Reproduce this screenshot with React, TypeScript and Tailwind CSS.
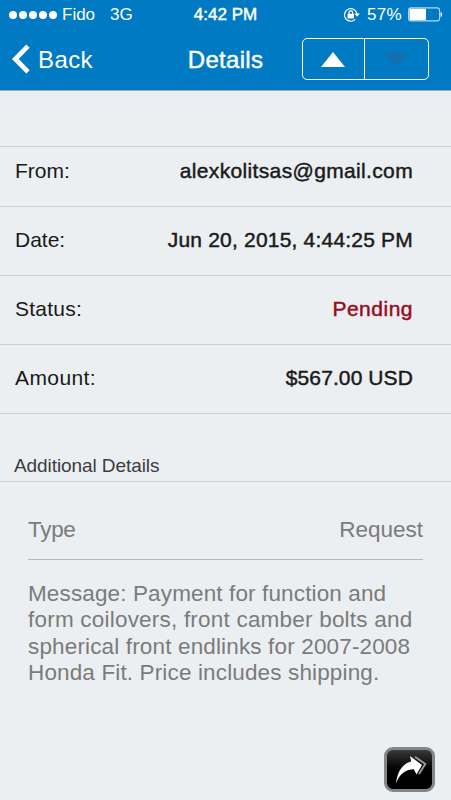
import React from "react";

const medium = "[-webkit-text-stroke:0.45px_currentColor]";

interface RowProps {
  label: string;
  value: string;
  labelClass?: string;
  valueClass?: string;
  rowClass?: string;
}

function Row({ label, value, labelClass = "", valueClass = "", rowClass = "h-[69px] leading-[65px]" }: RowProps) {
  return (
    <div className={`flex justify-between border-b border-[#cbcdcf] pl-[15px] pr-[38px] text-[21px] text-[#1a1a1a] whitespace-nowrap ${rowClass}`}>
      <span className={labelClass}>{label}</span>
      <span className={`${medium} ${valueClass}`}>{value}</span>
    </div>
  );
}

function StatusBar() {
  return (
    <div className="grid h-[30px] grid-cols-3 items-center whitespace-nowrap pb-px text-[17px] leading-[29px]">
      <div className="flex items-center pl-[9px]">
        <div className="flex gap-[2px]">
          {[0, 1, 2, 3, 4].map((i) => (
            <span key={i} className="h-2 w-2 rounded-full bg-white" />
          ))}
        </div>
        <span className="ml-[5px]">Fido</span>
        <span className="ml-[15px]">3G</span>
      </div>
      <div className={`text-center ${medium}`}>4:42 PM</div>
      <div className="flex items-center justify-end pr-[8px]">
        <svg className="h-4 w-[17px]" viewBox="0 0 17 16" fill="none">
          <path d="M14 7A6.300 6.300 0 1 0 12.300 12.300" stroke="white" strokeWidth="1.200" />
          <path d="M11.400 6.600h5.400l-2.700 3.200z" fill="white" />
          <rect x="4.600" y="6.800" width="6.400" height="4.600" rx=".5" fill="white" />
          <path d="M6 7.200V5.600a1.800 1.800 0 0 1 3.600 0V7.200" stroke="white" strokeWidth="1.200" />
        </svg>
        <span className="ml-[7px] tracking-[0.3px]">57%</span>
        <svg className="ml-[6px] h-[15px] w-[35px]" viewBox="0 0 35 15" fill="none">
          <rect x="0.600" y="0.900" width="31" height="13" rx="2.500" stroke="#b5d8ee" strokeWidth="1.100" />
          <rect x="1.500" y="1.800" width="16.500" height="11.400" rx="1" fill="white" />
          <path d="M32.600 5c2 .6 2 4.400 0 5z" fill="white" />
        </svg>
      </div>
    </div>
  );
}

function NavBar() {
  return (
    <div className="grid h-[60px] grid-cols-3 whitespace-nowrap text-[24px] leading-[59px]">
      <div className="flex pl-[12px]">
        <svg className="mt-[14px] h-[30px] w-[18px]" viewBox="0 0 18 30">
          <path d="M14.300 0.500L17.600 3.800L6.700 15L17.600 26.200L14.300 29.500L0 15z" fill="white" />
        </svg>
        <span className="ml-[8px] tracking-[0.4px]">Back</span>
      </div>
      <div className={`text-center tracking-[0.3px] ${medium}`}>Details</div>
      <div className="flex justify-end pr-[22px]">
        <div className="mt-[8px] flex h-[42px] w-[127px] rounded-[5px] border border-white">
          <div className="flex w-[62px] items-center justify-center border-r border-white">
            <svg className="h-[15px] w-6" viewBox="0 0 24 15"><path d="M12 0L24 15H0z" fill="white" /></svg>
          </div>
          <div className="flex flex-1 items-center justify-center">
            <svg className="h-[15px] w-6" viewBox="0 0 24 15"><path d="M0 0H24L12 15z" fill="#146faf" /></svg>
          </div>
        </div>
      </div>
    </div>
  );
}

export default function App() {
  return (
    <div className="flex h-[800px] w-[451px] flex-col overflow-hidden bg-[#ebeff1] font-['Liberation_Sans',Arial,sans-serif]">
      <header className="h-[91px] shrink-0 border-b border-[#9ba7b2] bg-[#007ac2] text-white">
        <StatusBar />
        <NavBar />
      </header>
      <main className="flex flex-1 flex-col">
        <div className="h-14 border-b border-[#cbcdcf]" />
        <Row label="From:" value="alexkolitsas@gmail.com" valueClass="tracking-[0.35px]" rowClass="h-[60px] leading-[47px]" />
        <Row label="Date:" value="Jun 20, 2015, 4:44:25 PM" valueClass="tracking-[0.2px]" />
        <Row label="Status:" value="Pending" labelClass="tracking-[0.25px]" valueClass="tracking-[0.5px] text-[#980b1d]" />
        <Row label="Amount:" value="$567.00 USD" labelClass="tracking-[0.4px]" valueClass="tracking-[0.1px]" />
        <h2 className="h-[68px] border-b border-[#cbcdcf] pl-[14px] pt-[37px] text-[19px] leading-[30px] tracking-[-0.08px] text-[#3c3c3c]">Additional Details</h2>
        <section className="px-7 text-[22.500px] text-[#7b7b7b]">
          <div className="flex h-[78px] justify-between border-b border-[#b5b8ba] leading-[95px]">
            <span className="tracking-[-0.3px]">Type</span>
            <span>Request</span>
          </div>
          <p className="whitespace-nowrap pt-[21px] leading-[26.400px]">
            <span className="block tracking-[0.13px]">Message: Payment for function and</span>
            <span className="block tracking-[0.21px]">form coilovers, front camber bolts and</span>
            <span className="block tracking-[0.15px]">spherical front endlinks for 2007-2008</span>
            <span className="block tracking-[0.14px]">Honda Fit. Price includes shipping.</span>
          </p>
        </section>
        <footer className="mt-auto flex justify-end pb-[8px] pr-[16px]">
          <div className="flex h-[45px] w-[51px] items-center justify-center rounded-[9px] border-[3px] border-[#858585] bg-linear-to-b from-[#3a3a3a] to-black to-70%">
            <svg className="h-[28px] w-[34px]" viewBox="0 0 34 28" fill="none">
              <path d="M3 27.500C4 17 9 7.500 18.200 5.500L17 0L29 9L23.500 18.500L20.800 13.200C12 13.500 6.500 18 3 27.500z" fill="white" />
              <path d="M22 0.800L32.300 8L26 18" stroke="#999" strokeWidth="1.900" />
            </svg>
          </div>
        </footer>
      </main>
    </div>
  );
}
